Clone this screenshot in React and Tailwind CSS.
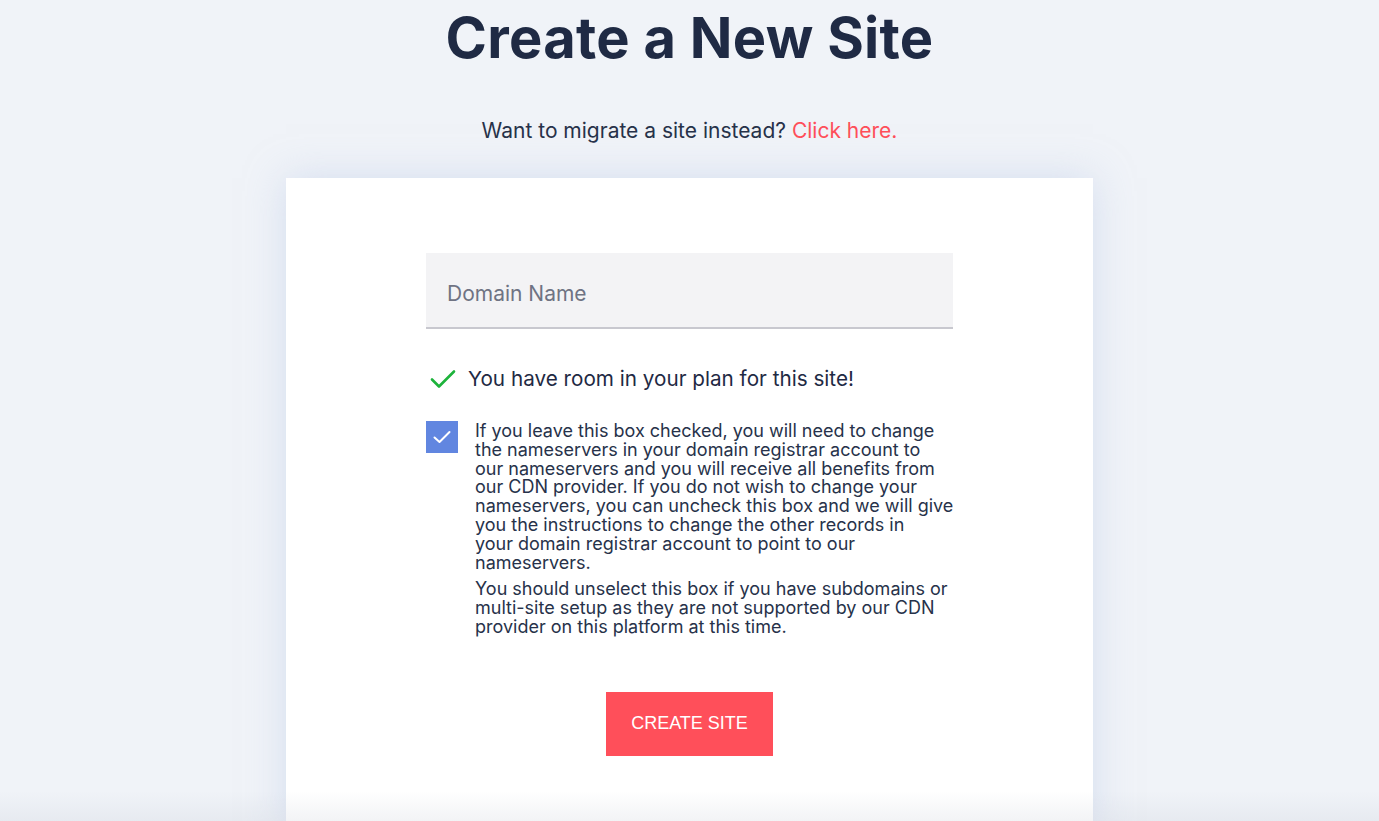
const para1 = [
  "If you leave this box checked, you will need to change",
  "the nameservers in your domain registrar account to",
  "our nameservers and you will receive all benefits from",
  "our CDN provider. If you do not wish to change your",
  "nameservers, you can uncheck this box and we will give",
  "you the instructions to change the other records in",
  "your domain registrar account to point to our",
  "nameservers.",
];
const para2 = [
  "You should unselect this box if you have subdomains or",
  "multi-site setup as they are not supported by our CDN",
  "provider on this platform at this time.",
];

export default function App() {
  return (
    <div className="relative min-h-[821px] overflow-hidden bg-[#f0f3f8] font-['Inter',sans-serif] text-[#1e2a45]">
      <div className="flex flex-col items-center">
        <h1 className="mt-[5px] text-[56px] font-bold leading-[66px] tracking-[0.3px] text-[#1f2a44]">Create a New Site</h1>
        <p className="mt-[46px] text-[21px] leading-[28px] text-[#27324a]">
          Want to migrate a site instead? <span className="text-[#ff4f5a]">Click here.</span>
        </p>
        <div className="mt-[33px] flex w-[807px] flex-col items-center bg-white pb-[80px] pt-[75px] shadow-[0_0_36px_rgba(185,202,232,0.5)]">
          <div className="w-[527px]">
            <div className="flex h-[76px] items-center border-b-2 border-[#c8c8cf] bg-[#f3f3f5] px-[21px] pt-[8px]">
              <span className="text-[21px] text-[#6f7383]">Domain Name</span>
            </div>
            <div className="mt-[36px] flex items-center gap-[12px] pl-[4px]">
              <svg width="26" height="20" viewBox="0 0 26 20" fill="none">
                <path d="M2 10.5 L9 17.5 L24 2.5" stroke="#1db33b" strokeWidth="2.6" strokeLinecap="round" strokeLinejoin="round" />
              </svg>
              <span className="text-[20.7px] leading-[28px] text-[#1f2a44]">You have room in your plan for this site!</span>
            </div>
            <div className="mt-[28px] flex gap-[17px]">
              <div className="flex h-[32px] w-[32px] shrink-0 items-center justify-center bg-[#6186e0]">
                <svg width="18" height="14" viewBox="0 0 18 14" fill="none">
                  <path d="M1.5 7.5 L6.5 12 L16.5 2" stroke="white" strokeWidth="2" strokeLinecap="round" strokeLinejoin="round" />
                </svg>
              </div>
              <div className="pt-[1px] text-[18px] leading-[18.8px] text-[#27324a]">
                <p>
                  {para1.map((l) => (
                    <span key={l} className="block whitespace-nowrap">{l}</span>
                  ))}
                </p>
                <p className="mt-[8px]">
                  {para2.map((l) => (
                    <span key={l} className="block whitespace-nowrap">{l}</span>
                  ))}
                </p>
              </div>
            </div>
          </div>
          <button className="mt-[55px] h-[64px] w-[167px] bg-[#ff4f5a] font-['Liberation_Sans',sans-serif] text-[18px] text-white">CREATE SITE</button>
        </div>
      </div>
      <div className="pointer-events-none absolute bottom-0 left-0 right-0 h-[45px] bg-gradient-to-b from-transparent to-[rgba(200,205,215,0.35)]" />
    </div>
  );
}
